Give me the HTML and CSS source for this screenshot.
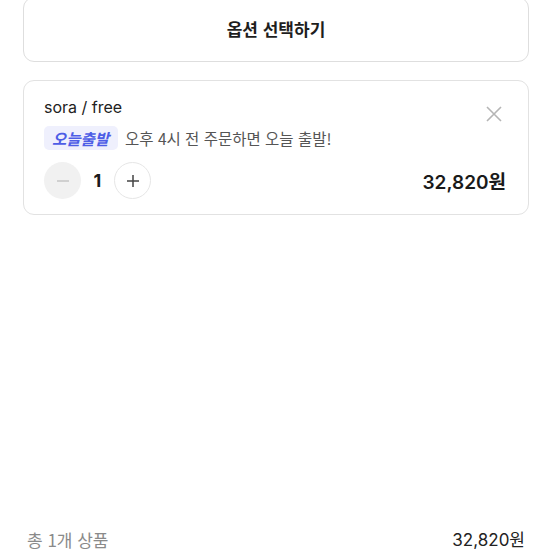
FILE: index.html
```html
<!DOCTYPE html>
<html lang="ko">
<head>
<meta charset="utf-8">
<link rel="stylesheet" href="styles.css">
</head>
<body>
<div class="page">
  <button class="select-btn">옵션 선택하기</button>
  <div class="card">
    <div class="card-head">
      <div class="name">sora / free</div>
      <svg class="close" width="16" height="16" viewBox="0 0 16 16"><path d="M1 1L15 15M15 1L1 15" stroke="#b5b5b5" stroke-width="1.6" fill="none"/></svg>
    </div>
    <div class="ship">
      <span class="badge">오늘출발</span>
      <span class="ship-text">오후 4시 전 주문하면 오늘 출발!</span>
    </div>
    <div class="card-foot">
      <div class="stepper">
        <span class="step minus"><svg width="14" height="14" viewBox="0 0 14 14"><path d="M1 7H13" stroke="#c4c4c4" stroke-width="1.5"/></svg></span>
        <span class="qty">1</span>
        <span class="step plus"><svg width="14" height="14" viewBox="0 0 14 14"><path d="M1 7H13M7 1V13" stroke="#444" stroke-width="1.5"/></svg></span>
      </div>
      <div class="price">32,820원</div>
    </div>
  </div>
  <div class="total">
    <span class="total-label">총 1개 상품</span>
    <span class="total-price">32,820원</span>
  </div>
</div>
</body>
</html>
```
FILE: styles.css
```css
* { box-sizing: border-box; }
html, body { margin: 0; padding: 0; background: #fff; }
body {
  font-family: "Inter", "Noto Sans CJK KR", sans-serif;
  color: #1a1a1a;
  width: 552px;
  height: 552px;
  overflow: hidden;
}
.page {
  height: 552px;
  display: flex;
  flex-direction: column;
  padding: 0 23px;
}
.select-btn {
  margin-top: -3px;
  height: 65px;
  width: 100%;
  background: #fff;
  border: 1px solid #dedede;
  border-radius: 11px;
  font-family: "Noto Sans CJK KR", sans-serif;
  font-size: 17px;
  font-weight: 700;
  color: #1e1e1e;
  padding: 0 0 2px 0;
}
.card {
  margin-top: 18px;
  border: 1px solid #e2e2e2;
  border-radius: 11px;
  padding: 14px 20px 0 20px;
  height: 135px;
}
.card-head {
  display: flex;
  justify-content: space-between;
  align-items: flex-start;
}
.name {
  font-size: 16px;
  line-height: 24px;
  color: #222;
}
.close { margin-top: 11px; margin-right: 6px; }
.ship {
  display: flex;
  align-items: center;
  gap: 7px;
  margin-top: 4px;
}
.badge {
  background: #eff0fd;
  color: #4d5de6;
  font-family: "Noto Sans CJK KR", sans-serif;
  font-weight: 700;
  font-style: italic;
  font-size: 15.5px;
  line-height: 24px;
  padding: 0 9px 0 8px;
  border-radius: 5px;
}
.ship-text {
  font-family: "Noto Sans CJK KR", sans-serif;
  font-size: 15.5px;
  color: #555;
  line-height: 24px;
}
.card-foot {
  display: flex;
  justify-content: space-between;
  align-items: center;
  margin-top: 12px;
}
.stepper {
  display: flex;
  align-items: center;
}
.step {
  width: 37px;
  height: 37px;
  border-radius: 50%;
  display: flex;
  align-items: center;
  justify-content: center;
}
.minus { background: #f1f1f1; }
.plus { border: 1px solid #e6e6e6; background: #fff; }
.qty {
  width: 33px;
  text-align: center;
  font-size: 18px;
  font-weight: 700;
}
.price {
  font-size: 19px;
  font-weight: 600;
  margin-right: 2px;
}
.total {
  margin-top: auto;
  display: flex;
  justify-content: space-between;
  align-items: center;
  padding: 0 4px 0 4px;
  height: 24px;
  margin-bottom: 0;
}
.total-label {
  font-family: "Noto Sans CJK KR", sans-serif;
  font-size: 17px;
  line-height: 24px;
  color: #8a8a8a;
}
.total-price {
  font-size: 17px;
  line-height: 24px;
  color: #222;
}
```
